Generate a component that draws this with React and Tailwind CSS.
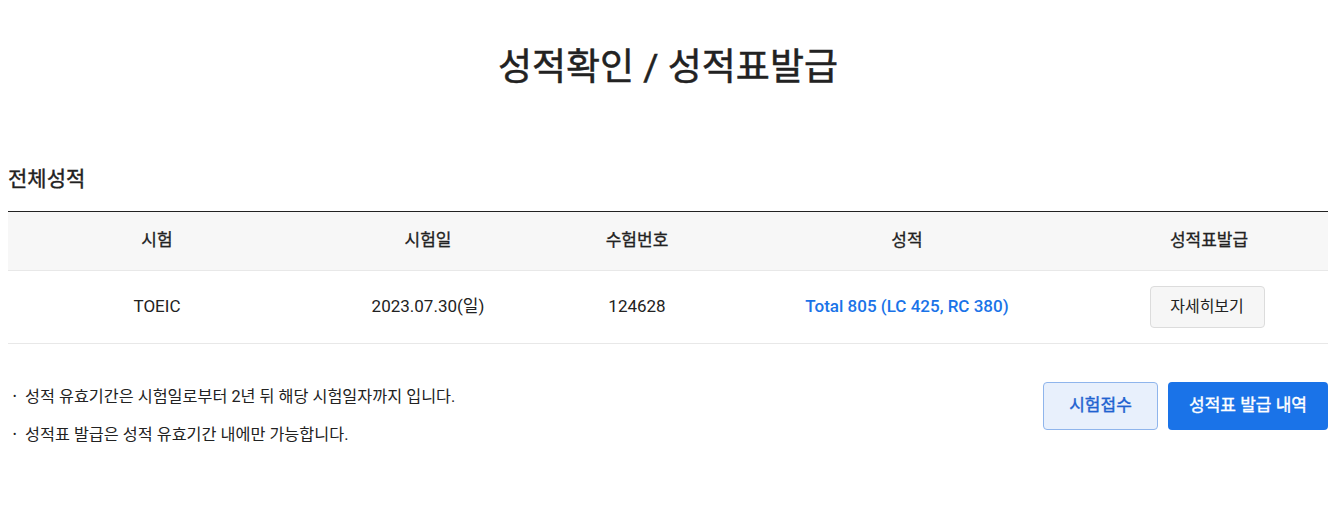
import React from 'react';

const columns = [
  { label: '시험', width: 'w-[298px]' },
  { label: '시험일', width: 'w-[244px]' },
  { label: '수험번호', width: 'w-[174px]' },
  { label: '성적', width: 'w-[366px]' },
  { label: '성적표발급', width: 'w-[238px]' },
];

const notes = [
  '성적 유효기간은 시험일로부터 2년 뒤 해당 시험일자까지 입니다.',
  '성적표 발급은 성적 유효기간 내에만 가능합니다.',
];

const App = () => {
  return (
    <div className="min-h-screen bg-white text-[#222] font-['Roboto','Noto_Sans_CJK_KR',sans-serif]">
      <div className="w-[1320px] ml-2">
        <h1 className="pt-[41px] text-center text-[37px] leading-[54px] font-normal text-[#222] [-webkit-text-stroke:0.5px_currentColor]">
          성적확인 / 성적표발급
        </h1>

        <h2 className="mt-[69px] text-[21px] leading-[30px] font-normal text-[#222] [-webkit-text-stroke:0.4px_currentColor]">
          전체성적
        </h2>

        {/* Score table */}
        <div className="mt-[17px] border-t border-[#222]">
          <div className="flex h-[59px] items-center bg-[#f7f7f7] border-b border-[#e8e8e8]">
            {columns.map((col) => (
              <div
                key={col.label}
                className={`${col.width} text-center text-[17px] font-normal [-webkit-text-stroke:0.3px_currentColor]`}
              >
                {col.label}
              </div>
            ))}
          </div>
          <div className="flex h-[73px] items-center border-b border-[#e8e8e8] text-[17px]">
            <div className="w-[298px] text-center">TOEIC</div>
            <div className="w-[244px] text-center">2023.07.30(일)</div>
            <div className="w-[174px] text-center">124628</div>
            <div className="w-[366px] text-center font-medium text-[#1a73e8]">Total 805 (LC 425, RC 380)</div>
            <div className="w-[238px] flex justify-center pr-[4px]">
              <button className="w-[115px] h-[42px] bg-[#f6f6f6] border border-[#dcdcdc] rounded-[4px] text-[16px] text-[#222]">
                자세히보기
              </button>
            </div>
          </div>
        </div>

        {/* Notes + actions */}
        <div className="mt-[38px] flex justify-between items-start">
          <ul className="pt-[3px] flex flex-col gap-[14px]">
            {notes.map((note) => (
              <li key={note} className="flex items-center text-[16.25px] leading-[24px] text-[#222]">
                <span className="w-[17px] pl-[5px] text-[10px]">•</span>
                {note}
              </li>
            ))}
          </ul>
          <div className="flex gap-[10px]">
            <button className="w-[115px] h-[48px] bg-[#e8f0fc] border border-[#8fb5ec] rounded-[4px] text-[17px] font-normal text-[#1f62d0] [-webkit-text-stroke:0.4px_currentColor]">
              시험접수
            </button>
            <button className="w-[160px] h-[48px] bg-[#1a73e8] rounded-[4px] text-[17px] font-normal text-white [-webkit-text-stroke:0.4px_currentColor]">
              성적표 발급 내역
            </button>
          </div>
        </div>
      </div>
    </div>
  );
};

export default App;
